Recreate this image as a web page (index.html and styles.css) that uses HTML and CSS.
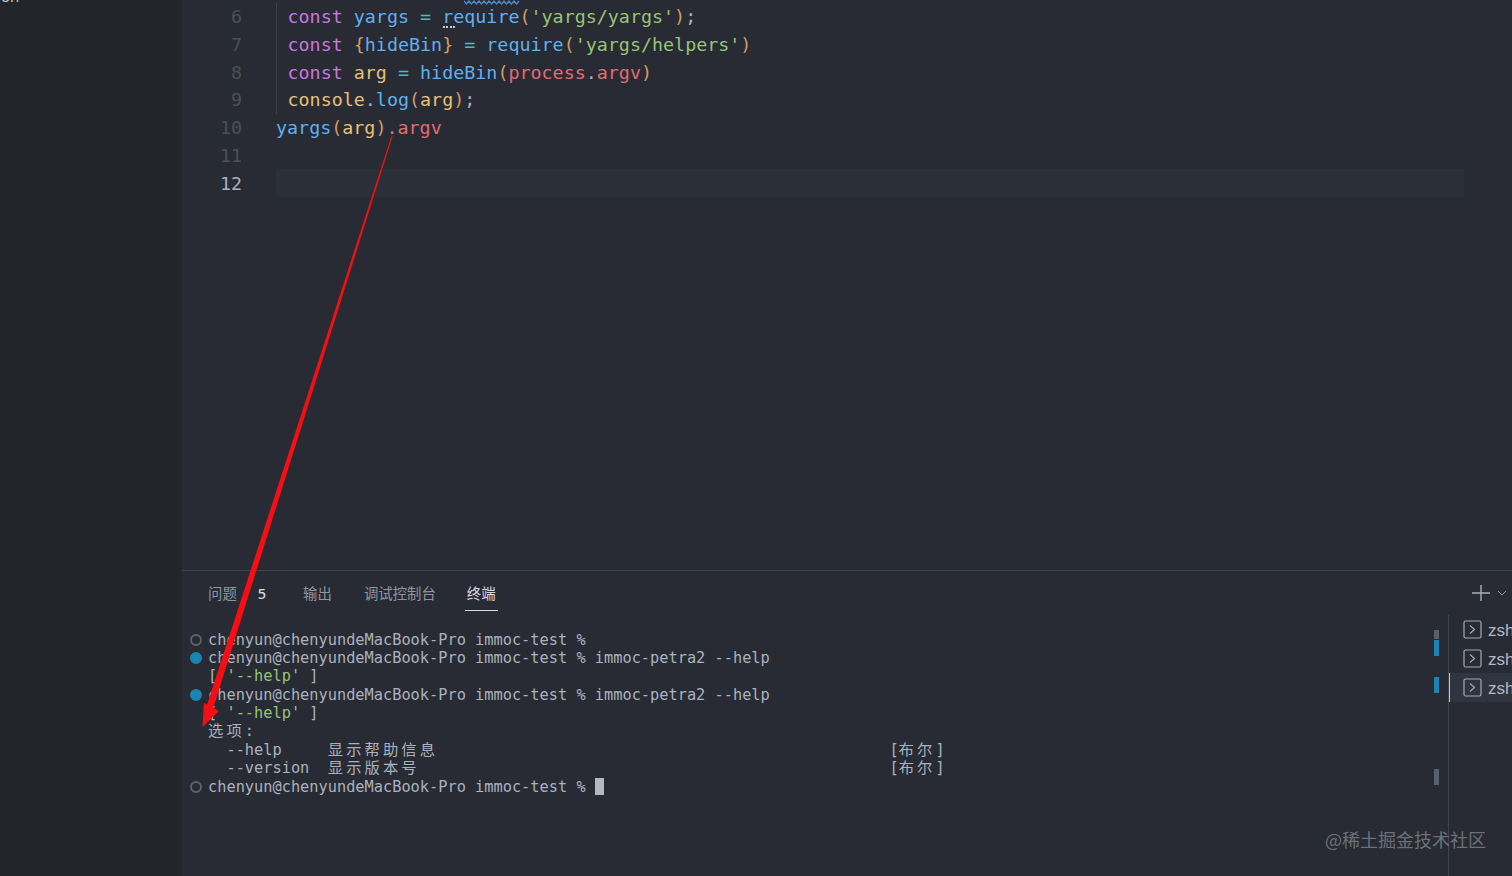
FILE: index.html
```html
<!DOCTYPE html>
<html lang="zh">
<head>
<meta charset="utf-8">
<title>VS Code</title>
<link rel="stylesheet" href="styles.css">
</head>
<body>
<div class="window">
  <aside class="sidebar"><span class="side-text">on</span></aside>
  <main class="main">
    <section class="editor">
      <div class="gutter">
        <div>6</div><div>7</div><div>8</div><div>9</div><div>10</div><div>11</div><div class="active">12</div>
      </div>
      <div class="code">
        <svg class="squiggle" width="56" height="5" viewBox="0 0 56 5"><path d="M0 1l2.500 3 2.500-3 2.500 3 2.500-3 2.500 3 2.500-3 2.500 3 2.500-3 2.500 3 2.500-3 2.500 3 2.500-3 2.500 3 2.500-3 2.500 3 2.500-3 2.500 3 2.500-3 2.500 3 2.500-3 2.500 3 2.500-3"/></svg>
        <i class="hint"></i>
        <div class="block">
          <div class="cl"><span class="kw">const</span> <span class="fn">yargs</span> <span class="op">=</span> <span class="fn">require</span><span class="pn">(</span><span class="st">'yargs/yargs'</span><span class="pn">)</span><span class="tx">;</span></div>
          <div class="cl"><span class="kw">const</span> <span class="pn">{</span><span class="fn">hideBin</span><span class="pn">}</span> <span class="op">=</span> <span class="fn">require</span><span class="pn">(</span><span class="st">'yargs/helpers'</span><span class="pn">)</span></div>
          <div class="cl"><span class="kw">const</span> <span class="yl">arg</span> <span class="op">=</span> <span class="fn">hideBin</span><span class="pn">(</span><span class="rd">process</span><span class="tx">.</span><span class="rd">argv</span><span class="pn">)</span></div>
          <div class="cl"><span class="yl">console</span><span class="tx">.</span><span class="fn">log</span><span class="pn">(</span><span class="yl">arg</span><span class="pn">)</span><span class="tx">;</span></div>
        </div>
        <div class="cl"><span class="fn">yargs</span><span class="pn">(</span><span class="yl">arg</span><span class="pn">)</span><span class="rd">.argv</span></div>
        <div class="cl">&nbsp;</div>
        <div class="cl current">&nbsp;</div>
      </div>
    </section>
    <section class="panel">
      <nav class="tabs">
        <div class="tab-group">
          <span class="tab">问题<b class="count">5</b></span>
          <span class="tab">输出</span>
          <span class="tab">调试控制台</span>
          <span class="tab on">终端</span>
        </div>
        <div class="actions">
          <svg class="plus" width="18" height="18" viewBox="0 0 18 18"><path d="M9 1v16M0 9h18"/></svg>
          <svg class="chev" width="10" height="6" viewBox="0 0 10 6"><path d="M1 1l4 4 4-4"/></svg>
        </div>
      </nav>
      <div class="panel-body">
        <div class="terminal">
          <div class="tl"><i class="dot"></i><span>chenyun@chenyundeMacBook-Pro immoc-test %</span></div>
          <div class="tl"><i class="dot blue"></i><span>chenyun@chenyundeMacBook-Pro immoc-test % immoc-petra2 --help</span></div>
          <div class="tl"><i class="nodot"></i><span>[ <span class="gr">'--help'</span> ]</span></div>
          <div class="tl"><i class="dot blue"></i><span>chenyun@chenyundeMacBook-Pro immoc-test % immoc-petra2 --help</span></div>
          <div class="tl"><i class="nodot"></i><span>[ <span class="gr">'--help'</span> ]</span></div>
          <div class="tl"><i class="nodot"></i><span><span class="cjk">选项</span>:</span></div>
          <div class="tl"><i class="nodot"></i><span>  --help     <span class="cjk">显示帮助信息</span>                                                 [<span class="cjk">布尔</span>]</span></div>
          <div class="tl"><i class="nodot"></i><span>  --version  <span class="cjk">显示版本号</span>                                                   [<span class="cjk">布尔</span>]</span></div>
          <div class="tl"><i class="dot"></i><span>chenyun@chenyundeMacBook-Pro immoc-test % <i class="cursor"></i></span></div>
        </div>
        <div class="rail">
          <i class="mk grey m1"></i>
          <i class="mk blue m2"></i>
          <i class="mk blue m3"></i>
          <i class="mk grey m4"></i>
        </div>
        <ul class="shells">
          <li class="shell"><svg width="19" height="19" viewBox="0 0 19 19"><rect x="1" y="1" width="17" height="17" rx="1.5"/><path d="M7 5.500l4.500 4-4.500 4"/></svg><span>zsh</span></li>
          <li class="shell"><svg width="19" height="19" viewBox="0 0 19 19"><rect x="1" y="1" width="17" height="17" rx="1.5"/><path d="M7 5.500l4.500 4-4.500 4"/></svg><span>zsh</span></li>
          <li class="shell sel"><svg width="19" height="19" viewBox="0 0 19 19"><rect x="1" y="1" width="17" height="17" rx="1.5"/><path d="M7 5.500l4.500 4-4.500 4"/></svg><span>zsh</span></li>
        </ul>
      </div>
    </section>
  </main>
</div>
<svg class="arrow" width="1512" height="876" viewBox="0 0 1512 876">
  <path class="shaft" d="M391.500 136L392.500 136.400L212 712L205.500 709.500Z"/>
  <path class="shaft" d="M202.500 727L204 703L219 711Z"/>
</svg>
<div class="watermark">@稀土掘金技术社区</div>
</body>
</html>
```

FILE: styles.css
```css
* { box-sizing: border-box; }
html, body { margin: 0; height: 100%; overflow: hidden; background: #282b33; }
.window { display: flex; width: 1512px; height: 876px; font-family: "DejaVu Sans Mono", "Noto Sans CJK SC", monospace; }
.sidebar { width: 182px; flex: none; background: #22262b; position: relative; overflow: hidden; }
.side-text { position: absolute; left: 1px; top: -13px; font: 15px/18px "Noto Sans", sans-serif; color: #c5c8ce; }
.main { flex: 1; display: flex; flex-direction: column; min-width: 0; }

.editor { flex: 1; display: flex; min-height: 0; padding-top: 3.3px; background: #282b33; }
.gutter { width: 94px; flex: none; padding-right: 34px; text-align: right; font-size: 18.35px; line-height: 27.7px; color: #4b5059; }
.gutter .active { color: #abb2bf; }
.code { flex: 1; position: relative; font-size: 18.35px; line-height: 27.7px; color: #abb2bf; padding-right: 48px; }
.block { border-left: 1px solid #3b4048; padding-left: 10.5px; }
.cl { height: 27.7px; white-space: pre; }
.current { background: #2b2f38; }
.squiggle { position: absolute; left: 188px; top: -3px; }
.squiggle path { fill: none; stroke: #4a90d0; stroke-width: 1.200; }
.hint { position: absolute; left: 167px; top: 23px; width: 12px; height: 2px; border-top: 2px dotted #c8ccd4; }
.kw { color: #c678dd; }
.fn { color: #61afef; }
.op { color: #56b6c2; }
.pn { color: #d19a66; }
.st { color: #98c379; }
.yl { color: #e5c07b; }
.rd { color: #e06c75; }
.tx { color: #abb2bf; }

.panel { height: 306px; flex: none; display: flex; flex-direction: column; border-top: 1px solid #3e4452; background: #282b33; }
.tabs { height: 44px; flex: none; display: flex; justify-content: space-between; align-items: flex-start; padding-left: 26px; font-family: "Noto Sans CJK SC", sans-serif; font-size: 14.4px; }
.tab-group { display: flex; gap: 32px; }
.tab { height: 40px; line-height: 44px; color: #8f96a3; display: flex; }
.tab .count { font: 500 14.5px/44px "Noto Sans", sans-serif; color: #d7dae0; margin-left: 21px; margin-right: 5px; }
.tab.on { color: #d7dae0; box-shadow: inset 0 -1px 0 #d7dae0; padding: 0 2px; margin-left: -3px; }
.actions { display: flex; align-items: center; gap: 7px; height: 44px; padding-right: 5px; }
.plus path { stroke: #a9aeb8; stroke-width: 1.4; fill: none; }
.chev path { stroke: #8f96a3; stroke-width: 1; fill: none; }

.panel-body { flex: 1; display: flex; min-height: 0; }
.terminal { flex: 1; padding: 15.5px 0 0 8px; font-size: 15.3px; line-height: 18.4px; color: #abb2bf; min-width: 0; }
.tl { display: flex; height: 18.4px; white-space: pre; }
.dot, .nodot { width: 12px; height: 12px; flex: none; margin-right: 6px; margin-top: 3px; border-radius: 50%; }
.dot { border: 2px solid #5c626e; }
.dot.blue { background: #1a85b0; border-color: #1a85b0; }
.gr { color: #98c379; }
.cjk { font-family: "Noto Sans CJK SC", sans-serif; letter-spacing: 3.1px; line-height: 0; }
.cursor { display: inline-block; width: 9px; height: 17px; background: #b4b8c4; vertical-align: -3px; }

.rail { width: 14px; flex: none; position: relative; }
.mk { position: absolute; left: 0; width: 5px; }
.mk.grey { background: #5a606b; }
.mk.blue { background: #1a85b0; }
.m1 { top: 15px; height: 9px; }
.m2 { top: 25px; height: 16px; }
.m3 { top: 62px; height: 16px; }
.m4 { top: 154px; height: 16px; }

.shells { width: 64px; flex: none; margin: 0; padding: 0; list-style: none; border-left: 1px solid #3e4452; overflow: hidden; }
.shell { height: 29px; display: flex; align-items: center; gap: 6px; padding-left: 14px; font: 17px "Liberation Sans", sans-serif; color: #b4b8c0; white-space: nowrap; }
.shell span { padding-top: 2px; }
.shell svg { flex: none; fill: none; stroke: #a4a9b3; stroke-width: 1.200; }
.shell.sel { background: #2f343e; box-shadow: inset 1px 0 0 #c4c8d0; }

.arrow { position: absolute; left: 0; top: 0; pointer-events: none; }
.arrow .shaft { fill: #f50f14; }
.watermark { position: absolute; left: 1325px; top: 827px; font: 18px/24px "Noto Sans CJK SC", sans-serif; color: rgba(170, 174, 182, 0.55); white-space: nowrap; }
```
